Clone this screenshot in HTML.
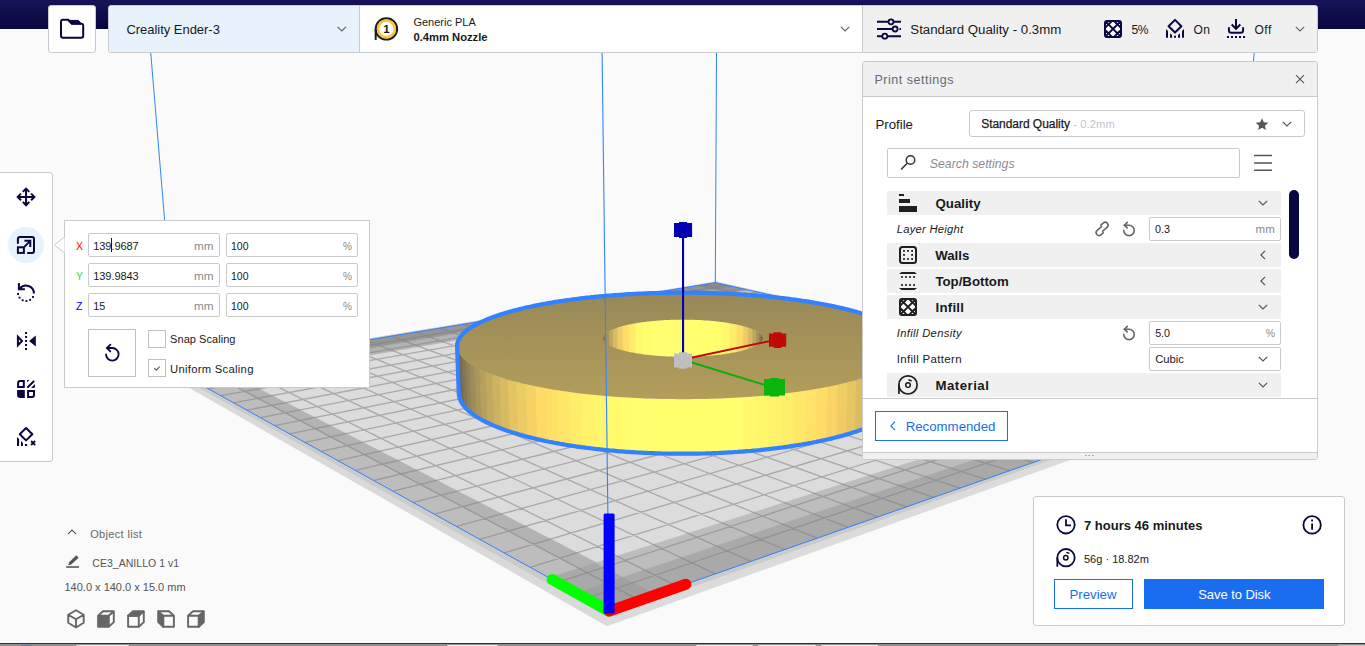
<!DOCTYPE html>
<html lang="en"><head><meta charset="utf-8"><title>Ultimaker Cura</title>
<style>
*{box-sizing:border-box;margin:0;padding:0}
html,body{width:1365px;height:646px;overflow:hidden;background:#fafafa}
body{position:relative;font-family:"Liberation Sans","DejaVu Sans",sans-serif;font-size:12px;color:#0c0b3e;-webkit-font-smoothing:antialiased}
#scene{position:absolute;left:0;top:0}
.abs{position:absolute}
.t{position:absolute;white-space:nowrap;line-height:1}
#hdr{position:absolute;left:0;top:0;width:1365px;height:29px;background:linear-gradient(#161458,#07063e)}
.box{position:absolute;background:#fff;border:1px solid #cacaca;border-radius:3px}
svg.i{position:absolute;overflow:visible}
.cat{left:24px;width:394px;height:24px;background:#f0f0f0}
.inp{left:286px;width:132px;height:24px;border-radius:2px}
.fld{width:132px;height:24px;border-radius:2px}
.tb{top:644.500px;height:1.500px;background:#ececec;border-radius:2px 2px 0 0}
</style></head><body>
<svg id="scene" width="1365" height="646" viewBox="0 0 1365 646"><defs><linearGradient id="tg" gradientUnits="userSpaceOnUse" x1="682.8" y1="97.1" x2="682.8" y2="577.1"><stop offset="0" stop-color="#666150"/><stop offset="1" stop-color="#e0c161"/></linearGradient></defs>
<rect width="1365" height="646" fill="#fafafa"/>
<polygon points="168.9,371.3 607.0,617.5 607.1,626.2 169.3,376.6" fill="#d9d9d9"/>
<polygon points="607.0,617.5 1233.1,395.9 1232.6,401.6 607.1,626.2" fill="#dbdbdb"/>
<polygon points="168.9,371.3 607.0,617.5 1233.1,395.9 715.7,281.5" fill="#cbcbcb"/>
<polygon points="177.2,371.5 609.1,611.1 1223.6,395.7 715.3,282.7" fill="#dcdcdc"/>
<polygon points="200.3,384.3 549.1,577.8 596.2,562.8 237.5,377.9" fill="#bdbdbd" stroke="#bdbdbd" stroke-width=".7"/>
<polygon points="223.7,380.3 578.8,568.3 596.2,562.8 237.5,377.9" fill="#b3b3b3" stroke="#b3b3b3" stroke-width=".7"/>
<polygon points="549.1,577.8 576.0,592.8 623.6,576.9 596.2,562.8" fill="#a9a9a9" stroke="#a9a9a9" stroke-width=".7"/>
<polygon points="576.0,592.8 609.1,611.1 657.2,594.2 623.6,576.9" fill="#a0a0a0" stroke="#a0a0a0" stroke-width=".7"/>
<polygon points="189.4,378.3 200.3,384.3 237.5,377.9 226.1,372.1" fill="#969696" stroke="#969696" stroke-width=".7"/>
<polygon points="177.2,371.5 189.4,378.3 226.1,372.1 213.5,365.5" fill="#8c8c8c" stroke="#8c8c8c" stroke-width=".7"/>
<polygon points="726.2,293.3 1141.6,388.6 1162.2,382.0 747.0,289.7" fill="#bdbdbd" stroke="#bdbdbd" stroke-width=".7"/>
<polygon points="726.2,293.3 1141.6,388.6 1149.4,386.1 734.1,292.0" fill="#b3b3b3" stroke="#b3b3b3" stroke-width=".7"/>
<polygon points="1141.6,388.6 1169.6,395.0 1190.1,388.2 1162.2,382.0" fill="#a9a9a9" stroke="#a9a9a9" stroke-width=".7"/>
<polygon points="1169.6,395.0 1203.3,402.8 1223.6,395.7 1190.1,388.2" fill="#a0a0a0" stroke="#a0a0a0" stroke-width=".7"/>
<polygon points="711.3,289.9 726.2,293.3 747.0,289.7 732.1,286.4" fill="#969696" stroke="#969696" stroke-width=".7"/>
<polygon points="694.6,286.1 711.3,289.9 732.1,286.4 715.3,282.7" fill="#8c8c8c" stroke="#8c8c8c" stroke-width=".7"/>
<polygon points="596.2,562.8 623.6,576.9 1169.6,395.0 1141.6,388.6" fill="#bdbdbd" stroke="#bdbdbd" stroke-width=".7"/>
<polygon points="623.6,576.9 657.2,594.2 1203.3,402.8 1169.6,395.0" fill="#a9a9a9" stroke="#a9a9a9" stroke-width=".7"/>
<polygon points="226.1,372.1 237.5,377.9 726.2,293.3 711.3,289.9" fill="#b2b2b2" stroke="#b2b2b2" stroke-width=".7"/>
<polygon points="213.5,365.5 226.1,372.1 711.3,289.9 694.6,286.1" fill="#969696" stroke="#969696" stroke-width=".7"/>
<path d="M200.0 367.7L639.5 600.4M185.5 376.1L726.7 285.2M229.7 362.8L678.4 586.8M196.8 382.4L742.3 288.7M258.5 358.1L715.4 573.8M208.6 388.9L758.3 292.2M286.5 353.5L750.8 561.4M220.8 395.7L774.7 295.9M313.8 349.0L784.7 549.5M233.5 402.8L791.5 299.6M340.3 344.6L817.1 538.2M246.7 410.1L808.9 303.5M366.2 340.3L848.1 527.3M260.4 417.7L826.7 307.4M391.3 336.2L877.8 516.9M274.6 425.6L845.0 311.5M415.8 332.1L906.3 506.9M289.5 433.8L863.9 315.7M439.7 328.2L933.7 497.3M304.9 442.3L883.3 320.0M462.9 324.3L960.0 488.1M321.0 451.3L903.3 324.5M485.6 320.6L985.3 479.2M337.8 460.6L923.9 329.1M507.8 316.9L1009.7 470.7M355.4 470.3L945.2 333.8M529.4 313.4L1033.2 462.4M373.7 480.5L967.1 338.7M550.4 309.9L1055.8 454.5M392.9 491.2L989.8 343.7M571.0 306.5L1077.6 446.9M413.1 502.4L1013.1 348.9M591.1 303.2L1098.7 439.5M434.2 514.1L1037.3 354.3M610.7 299.9L1119.0 432.3M456.4 526.4L1062.2 359.8M629.9 296.8L1138.6 425.5M479.7 539.3L1088.0 365.5M648.7 293.7L1157.6 418.8M504.2 552.9L1114.7 371.5M667.0 290.7L1176.0 412.4M530.1 567.3L1142.3 377.6M684.9 287.7L1193.8 406.1M557.4 582.4L1170.9 384.0M702.4 284.8L1211.0 400.1M586.3 598.5L1200.6 390.6" stroke="#808080" stroke-opacity=".55" stroke-width="1.3" fill="none"/>
<path d="M177.2 371.5L609.1 611.1M609.1 611.1L1223.6 395.7M1223.6 395.7L715.3 282.7M715.3 282.7L177.2 371.5M177.2 371.5L107.4 -469.1M1223.6 395.7L1304.3 -508.5M715.3 282.7L718.6 -330.8" stroke="#3282ff" stroke-width="1" fill="none"/>

<g shape-rendering="geometricPrecision"><polygon points="742.5,370.6 747.8,372.4 748.3,327.6 743.0,326.0" fill="#eecc63" stroke="#eecc63" stroke-width=".6"/>
<polygon points="747.8,372.4 752.3,374.3 752.8,329.4 748.3,327.6" fill="#d7ba60" stroke="#d7ba60" stroke-width=".6"/>
<polygon points="752.3,374.3 756.0,376.4 756.6,331.2 752.8,329.4" fill="#bea65c" stroke="#bea65c" stroke-width=".6"/>
<polygon points="756.0,376.4 758.8,378.6 759.4,333.1 756.6,331.2" fill="#a39159" stroke="#a39159" stroke-width=".6"/>
<polygon points="758.8,378.6 760.8,380.9 761.4,335.1 759.4,333.1" fill="#877b55" stroke="#877b55" stroke-width=".6"/>
<polygon points="760.8,380.9 761.8,383.3 762.4,337.2 761.4,335.1" fill="#6a6451" stroke="#6a6451" stroke-width=".6"/>
<polygon points="761.8,383.3 761.7,385.6 762.3,339.3 762.4,337.2" fill="#4d4d4d" stroke="#4d4d4d" stroke-width=".6"/>
<polygon points="603.9,385.5 603.9,383.1 603.3,337.0 603.3,339.1" fill="#4f4f4d" stroke="#4f4f4d" stroke-width=".6"/>
<polygon points="603.9,383.1 605.0,380.8 604.4,335.0 603.3,337.0" fill="#6c6651" stroke="#6c6651" stroke-width=".6"/>
<polygon points="605.0,380.8 607.0,378.5 606.4,333.0 604.4,335.0" fill="#897c55" stroke="#897c55" stroke-width=".6"/>
<polygon points="607.0,378.5 609.9,376.3 609.3,331.1 606.4,333.0" fill="#a59259" stroke="#a59259" stroke-width=".6"/>
<polygon points="609.9,376.3 613.6,374.2 613.1,329.2 609.3,331.1" fill="#bfa75d" stroke="#bfa75d" stroke-width=".6"/>
<polygon points="613.6,374.2 618.2,372.2 617.7,327.5 613.1,329.2" fill="#d9bb60" stroke="#d9bb60" stroke-width=".6"/>
<polygon points="618.2,372.2 623.5,370.4 623.1,325.9 617.7,327.5" fill="#f0cd64" stroke="#f0cd64" stroke-width=".6"/>
<polygon points="623.5,370.4 629.5,368.8 629.1,324.5 623.1,325.9" fill="#ffde67" stroke="#ffde67" stroke-width=".6"/>
<polygon points="629.5,368.8 636.0,367.4 635.7,323.2 629.1,324.5" fill="#ffed69" stroke="#ffed69" stroke-width=".6"/>
<polygon points="636.0,367.4 643.1,366.1 642.8,322.2 635.7,323.2" fill="#fffa6c" stroke="#fffa6c" stroke-width=".6"/>
<polygon points="643.1,366.1 650.6,365.1 650.3,321.3 642.8,322.2" fill="#ffff6e" stroke="#ffff6e" stroke-width=".6"/>
<polygon points="650.6,365.1 658.4,364.3 658.2,320.6 650.3,321.3" fill="#ffff6f" stroke="#ffff6f" stroke-width=".6"/>
<polygon points="658.4,364.3 666.5,363.7 666.4,320.0 658.2,320.6" fill="#ffff70" stroke="#ffff70" stroke-width=".6"/>
<polygon points="666.5,363.7 674.8,363.4 674.7,319.7 666.4,320.0" fill="#ffff70" stroke="#ffff70" stroke-width=".6"/>
<polygon points="674.8,363.4 683.1,363.3 683.1,319.6 674.7,319.7" fill="#ffff70" stroke="#ffff70" stroke-width=".6"/>
<polygon points="683.1,363.3 691.5,363.4 691.5,319.8 683.1,319.6" fill="#ffff70" stroke="#ffff70" stroke-width=".6"/>
<polygon points="691.5,363.4 699.7,363.8 699.8,320.1 691.5,319.8" fill="#ffff70" stroke="#ffff70" stroke-width=".6"/>
<polygon points="699.7,363.8 707.8,364.4 708.0,320.6 699.8,320.1" fill="#ffff70" stroke="#ffff70" stroke-width=".6"/>
<polygon points="707.8,364.4 715.6,365.2 715.8,321.3 708.0,320.6" fill="#ffff6f" stroke="#ffff6f" stroke-width=".6"/>
<polygon points="715.6,365.2 723.1,366.2 723.4,322.2 715.8,321.3" fill="#ffff6d" stroke="#ffff6d" stroke-width=".6"/>
<polygon points="723.1,366.2 730.1,367.5 730.4,323.3 723.4,322.2" fill="#fffa6b" stroke="#fffa6b" stroke-width=".6"/>
<polygon points="730.1,367.5 736.6,368.9 737.0,324.6 730.4,323.3" fill="#ffec69" stroke="#ffec69" stroke-width=".6"/>
<polygon points="736.6,368.9 742.5,370.6 743.0,326.0 737.0,324.6" fill="#ffdd66" stroke="#ffdd66" stroke-width=".6"/>
<polygon points="906.8,394.7 906.1,398.0 907.9,350.1 908.5,347.3" fill="#57544e" stroke="#57544e" stroke-width=".6"/>
<polygon points="906.1,398.0 904.8,401.2 906.6,353.0 907.9,350.1" fill="#635e50" stroke="#635e50" stroke-width=".6"/>
<polygon points="904.8,401.2 902.9,404.5 904.6,355.8 906.6,353.0" fill="#706851" stroke="#706851" stroke-width=".6"/>
<polygon points="902.9,404.5 900.2,407.7 902.0,358.7 904.6,355.8" fill="#7c7253" stroke="#7c7253" stroke-width=".6"/>
<polygon points="900.2,407.7 896.9,411.0 898.7,361.6 902.0,358.7" fill="#897c55" stroke="#897c55" stroke-width=".6"/>
<polygon points="896.9,411.0 892.9,414.2 894.6,364.4 898.7,361.6" fill="#958657" stroke="#958657" stroke-width=".6"/>
<polygon points="892.9,414.2 888.2,417.4 889.9,367.2 894.6,364.4" fill="#a18f58" stroke="#a18f58" stroke-width=".6"/>
<polygon points="888.2,417.4 882.8,420.5 884.4,369.9 889.9,367.2" fill="#ad995a" stroke="#ad995a" stroke-width=".6"/>
<polygon points="882.8,420.5 876.7,423.5 878.3,372.6 884.4,369.9" fill="#b9a25c" stroke="#b9a25c" stroke-width=".6"/>
<polygon points="876.7,423.5 869.9,426.5 871.5,375.2 878.3,372.6" fill="#c5ab5d" stroke="#c5ab5d" stroke-width=".6"/>
<polygon points="869.9,426.5 862.4,429.4 863.9,377.7 871.5,375.2" fill="#d0b45f" stroke="#d0b45f" stroke-width=".6"/>
<polygon points="862.4,429.4 854.3,432.1 855.7,380.2 863.9,377.7" fill="#dbbd61" stroke="#dbbd61" stroke-width=".6"/>
<polygon points="854.3,432.1 845.5,434.8 846.9,382.5 855.7,380.2" fill="#e6c562" stroke="#e6c562" stroke-width=".6"/>
<polygon points="845.5,434.8 836.1,437.3 837.4,384.8 846.9,382.5" fill="#f0cd63" stroke="#f0cd63" stroke-width=".6"/>
<polygon points="836.1,437.3 826.1,439.7 827.3,386.9 837.4,384.8" fill="#f9d465" stroke="#f9d465" stroke-width=".6"/>
<polygon points="826.1,439.7 815.5,442.0 816.7,388.8 827.3,386.9" fill="#ffdc66" stroke="#ffdc66" stroke-width=".6"/>
<polygon points="815.5,442.0 804.4,444.0 805.5,390.7 816.7,388.8" fill="#ffe267" stroke="#ffe267" stroke-width=".6"/>
<polygon points="804.4,444.0 792.8,445.9 793.8,392.3 805.5,390.7" fill="#ffe868" stroke="#ffe868" stroke-width=".6"/>
<polygon points="792.8,445.9 780.7,447.6 781.6,393.8 793.8,392.3" fill="#ffee69" stroke="#ffee69" stroke-width=".6"/>
<polygon points="780.7,447.6 768.2,449.2 769.0,395.2 781.6,393.8" fill="#fff36a" stroke="#fff36a" stroke-width=".6"/>
<polygon points="768.2,449.2 755.4,450.5 756.1,396.3 769.0,395.2" fill="#fff76b" stroke="#fff76b" stroke-width=".6"/>
<polygon points="755.4,450.5 742.3,451.6 742.8,397.3 756.1,396.3" fill="#fffb6c" stroke="#fffb6c" stroke-width=".6"/>
<polygon points="742.3,451.6 728.9,452.4 729.3,398.1 742.8,397.3" fill="#fffe6c" stroke="#fffe6c" stroke-width=".6"/>
<polygon points="728.9,452.4 715.3,453.1 715.6,398.6 729.3,398.1" fill="#ffff6d" stroke="#ffff6d" stroke-width=".6"/>
<polygon points="715.3,453.1 701.5,453.5 701.7,399.0 715.6,398.6" fill="#ffff6d" stroke="#ffff6d" stroke-width=".6"/>
<polygon points="701.5,453.5 687.7,453.7 687.8,399.2 701.7,399.0" fill="#ffff6d" stroke="#ffff6d" stroke-width=".6"/>
<polygon points="687.7,453.7 673.9,453.7 673.8,399.1 687.8,399.2" fill="#ffff6d" stroke="#ffff6d" stroke-width=".6"/>
<polygon points="673.9,453.7 660.1,453.4 659.9,398.9 673.8,399.1" fill="#ffff6d" stroke="#ffff6d" stroke-width=".6"/>
<polygon points="660.1,453.4 646.4,452.9 646.1,398.5 659.9,398.9" fill="#ffff6d" stroke="#ffff6d" stroke-width=".6"/>
<polygon points="646.4,452.9 632.9,452.2 632.4,397.8 646.1,398.5" fill="#ffff6d" stroke="#ffff6d" stroke-width=".6"/>
<polygon points="632.9,452.2 619.5,451.3 619.0,397.0 632.4,397.8" fill="#fffd6c" stroke="#fffd6c" stroke-width=".6"/>
<polygon points="619.5,451.3 606.5,450.1 605.8,396.0 619.0,397.0" fill="#fffa6b" stroke="#fffa6b" stroke-width=".6"/>
<polygon points="606.5,450.1 593.7,448.7 592.9,394.8 605.8,396.0" fill="#fff66b" stroke="#fff66b" stroke-width=".6"/>
<polygon points="593.7,448.7 581.4,447.2 580.5,393.4 592.9,394.8" fill="#fff16a" stroke="#fff16a" stroke-width=".6"/>
<polygon points="581.4,447.2 569.5,445.4 568.4,391.8 580.5,393.4" fill="#ffec69" stroke="#ffec69" stroke-width=".6"/>
<polygon points="569.5,445.4 558.0,443.4 556.9,390.1 568.4,391.8" fill="#ffe668" stroke="#ffe668" stroke-width=".6"/>
<polygon points="558.0,443.4 547.0,441.3 545.8,388.3 556.9,390.1" fill="#ffe067" stroke="#ffe067" stroke-width=".6"/>
<polygon points="547.0,441.3 536.6,439.0 535.3,386.2 545.8,388.3" fill="#ffda66" stroke="#ffda66" stroke-width=".6"/>
<polygon points="536.6,439.0 526.8,436.6 525.4,384.1 535.3,386.2" fill="#f6d264" stroke="#f6d264" stroke-width=".6"/>
<polygon points="526.8,436.6 517.6,434.0 516.1,381.8 525.4,384.1" fill="#edcb63" stroke="#edcb63" stroke-width=".6"/>
<polygon points="517.6,434.0 509.0,431.3 507.5,379.5 516.1,381.8" fill="#e3c362" stroke="#e3c362" stroke-width=".6"/>
<polygon points="509.0,431.3 501.0,428.5 499.5,377.0 507.5,379.5" fill="#d8ba60" stroke="#d8ba60" stroke-width=".6"/>
<polygon points="501.0,428.5 493.7,425.6 492.1,374.4 499.5,377.0" fill="#cdb25f" stroke="#cdb25f" stroke-width=".6"/>
<polygon points="493.7,425.6 487.2,422.6 485.5,371.8 492.1,374.4" fill="#c2a95d" stroke="#c2a95d" stroke-width=".6"/>
<polygon points="487.2,422.6 481.2,419.5 479.6,369.1 485.5,371.8" fill="#b6a05b" stroke="#b6a05b" stroke-width=".6"/>
<polygon points="481.2,419.5 476.0,416.4 474.3,366.3 479.6,369.1" fill="#aa965a" stroke="#aa965a" stroke-width=".6"/>
<polygon points="476.0,416.4 471.5,413.2 469.8,363.5 474.3,366.3" fill="#9e8d58" stroke="#9e8d58" stroke-width=".6"/>
<polygon points="471.5,413.2 467.7,410.0 466.0,360.7 469.8,363.5" fill="#928356" stroke="#928356" stroke-width=".6"/>
<polygon points="467.7,410.0 464.6,406.8 462.8,357.9 466.0,360.7" fill="#857954" stroke="#857954" stroke-width=".6"/>
<polygon points="464.6,406.8 462.1,403.5 460.4,355.0 462.8,357.9" fill="#796f53" stroke="#796f53" stroke-width=".6"/>
<polygon points="462.1,403.5 460.4,400.3 458.6,352.1 460.4,355.0" fill="#6c6551" stroke="#6c6551" stroke-width=".6"/>
<polygon points="460.4,400.3 459.3,397.0 457.5,349.3 458.6,352.1" fill="#5f5b4f" stroke="#5f5b4f" stroke-width=".6"/>
<polygon points="459.3,397.0 458.8,393.8 457.1,346.4 457.5,349.3" fill="#53524d" stroke="#53524d" stroke-width=".6"/>
<path fill-rule="evenodd" fill="url(#tg)" d="M836.8,307.0L839.4,307.6L841.9,308.1L844.4,308.7L846.8,309.3L849.3,309.9L851.6,310.6L854.0,311.2L856.3,311.8L858.5,312.5L860.8,313.2L863.0,313.8L865.1,314.5L867.2,315.2L869.3,315.9L871.3,316.6L873.3,317.3L875.2,318.1L877.1,318.8L878.9,319.5L880.7,320.3L882.5,321.1L884.2,321.8L885.8,322.6L887.4,323.4L889.0,324.2L890.5,325.0L891.9,325.8L893.3,326.7L894.6,327.5L895.9,328.3L897.1,329.2L898.3,330.0L899.4,330.9L900.4,331.7L901.4,332.6L902.3,333.5L903.2,334.4L904.0,335.3L904.8,336.2L905.4,337.1L906.0,338.0L906.6,338.9L907.1,339.8L907.5,340.7L907.8,341.6L908.1,342.6L908.3,343.5L908.5,344.4L908.6,345.4L908.6,346.3L908.5,347.3L908.4,348.2L908.2,349.2L907.9,350.1L907.5,351.1L907.1,352.0L906.6,353.0L906.0,353.9L905.4,354.9L904.6,355.8L903.8,356.8L902.9,357.8L902.0,358.7L901.0,359.7L899.8,360.6L898.7,361.6L897.4,362.5L896.0,363.4L894.6,364.4L893.1,365.3L891.5,366.2L889.9,367.2L888.1,368.1L886.3,369.0L884.4,369.9L882.5,370.8L880.4,371.7L878.3,372.6L876.1,373.5L873.8,374.3L871.5,375.2L869.0,376.1L866.5,376.9L863.9,377.7L861.3,378.6L858.5,379.4L855.7,380.2L852.9,381.0L849.9,381.8L846.9,382.5L843.8,383.3L840.6,384.0L837.4,384.8L834.1,385.5L830.8,386.2L827.3,386.9L823.8,387.5L820.3,388.2L816.7,388.8L813.0,389.5L809.3,390.1L805.5,390.7L801.6,391.2L797.7,391.8L793.8,392.3L789.8,392.8L785.7,393.3L781.6,393.8L777.4,394.3L773.3,394.7L769.0,395.2L764.7,395.6L760.4,395.9L756.1,396.3L751.7,396.7L747.3,397.0L742.8,397.3L738.3,397.6L733.8,397.8L729.3,398.1L724.7,398.3L720.2,398.5L715.6,398.6L711.0,398.8L706.4,398.9L701.7,399.0L697.1,399.1L692.4,399.1L687.8,399.2L683.1,399.2L678.5,399.2L673.8,399.1L669.2,399.1L664.5,399.0L659.9,398.9L655.3,398.8L650.7,398.6L646.1,398.5L641.5,398.3L636.9,398.1L632.4,397.8L627.9,397.6L623.4,397.3L619.0,397.0L614.5,396.7L610.1,396.3L605.8,396.0L601.5,395.6L597.2,395.2L592.9,394.8L588.7,394.3L584.6,393.9L580.5,393.4L576.4,392.9L572.4,392.4L568.4,391.8L564.5,391.3L560.7,390.7L556.9,390.1L553.1,389.5L549.5,388.9L545.8,388.3L542.3,387.6L538.8,386.9L535.3,386.2L532.0,385.5L528.7,384.8L525.4,384.1L522.3,383.4L519.2,382.6L516.1,381.8L513.2,381.1L510.3,380.3L507.5,379.5L504.7,378.6L502.1,377.8L499.5,377.0L497.0,376.1L494.5,375.3L492.1,374.4L489.9,373.6L487.6,372.7L485.5,371.8L483.4,370.9L481.5,370.0L479.6,369.1L477.7,368.2L476.0,367.3L474.3,366.3L472.7,365.4L471.2,364.5L469.8,363.5L468.4,362.6L467.2,361.7L466.0,360.7L464.8,359.8L463.8,358.8L462.8,357.9L461.9,356.9L461.1,355.9L460.4,355.0L459.7,354.0L459.1,353.1L458.6,352.1L458.2,351.2L457.8,350.2L457.5,349.3L457.3,348.3L457.2,347.4L457.1,346.4L457.1,345.5L457.1,344.5L457.3,343.6L457.5,342.7L457.8,341.7L458.1,340.8L458.5,339.9L459.0,339.0L459.5,338.1L460.1,337.2L460.8,336.3L461.5,335.4L462.3,334.5L463.2,333.6L464.1,332.7L465.1,331.8L466.1,331.0L467.2,330.1L468.4,329.3L469.6,328.4L470.9,327.6L472.2,326.7L473.6,325.9L475.0,325.1L476.5,324.3L478.0,323.5L479.6,322.7L481.3,321.9L482.9,321.2L484.7,320.4L486.5,319.6L488.3,318.9L490.2,318.1L492.1,317.4L494.1,316.7L496.1,316.0L498.2,315.3L500.3,314.6L502.4,313.9L504.6,313.2L506.8,312.6L509.1,311.9L511.4,311.3L513.7,310.6L516.1,310.0L518.5,309.4L520.9,308.8L523.4,308.2L525.9,307.6L528.5,307.0L531.1,306.5L533.7,305.9L536.3,305.4L539.0,304.9L541.7,304.3L544.4,303.8L547.2,303.3L550.0,302.9L552.8,302.4L555.6,301.9L558.5,301.5L561.4,301.0L564.3,300.6L567.2,300.2L570.2,299.8L573.1,299.4L576.1,299.0L579.1,298.6L582.2,298.2L585.2,297.9L588.3,297.5L591.4,297.2L594.5,296.9L597.6,296.6L600.8,296.3L603.9,296.0L607.1,295.7L610.3,295.5L613.5,295.2L616.7,295.0L619.9,294.8L623.2,294.5L626.4,294.3L629.6,294.2L632.9,294.0L636.2,293.8L639.5,293.6L642.8,293.5L646.0,293.4L649.4,293.2L652.7,293.1L656.0,293.0L659.3,292.9L662.6,292.9L665.9,292.8L669.3,292.8L672.6,292.7L675.9,292.7L679.3,292.7L682.6,292.7L685.9,292.7L689.3,292.7L692.6,292.7L695.9,292.7L699.3,292.8L702.6,292.9L705.9,292.9L709.2,293.0L712.5,293.1L715.8,293.2L719.2,293.4L722.4,293.5L725.7,293.6L729.0,293.8L732.3,294.0L735.6,294.1L738.8,294.3L742.1,294.5L745.3,294.7L748.5,295.0L751.7,295.2L754.9,295.4L758.1,295.7L761.3,296.0L764.4,296.3L767.6,296.6L770.7,296.9L773.8,297.2L776.9,297.5L780.0,297.8L783.1,298.2L786.1,298.6L789.1,298.9L792.1,299.3L795.1,299.7L798.1,300.1L801.0,300.5L803.9,301.0L806.8,301.4L809.7,301.9L812.5,302.3L815.3,302.8L818.1,303.3L820.9,303.8L823.6,304.3L826.3,304.8L829.0,305.3L831.6,305.9L834.2,306.4ZM741.4,325.6L742.3,325.9L743.2,326.1L744.1,326.4L744.9,326.6L745.8,326.8L746.6,327.1L747.4,327.3L748.2,327.6L748.9,327.9L749.7,328.1L750.4,328.4L751.1,328.6L751.8,328.9L752.4,329.2L753.1,329.5L753.7,329.8L754.3,330.0L754.9,330.3L755.5,330.6L756.0,330.9L756.6,331.2L757.1,331.5L757.5,331.8L758.0,332.1L758.4,332.4L758.9,332.7L759.3,333.0L759.6,333.3L760.0,333.6L760.3,333.9L760.6,334.2L760.9,334.5L761.2,334.9L761.4,335.2L761.6,335.5L761.8,335.8L762.0,336.1L762.1,336.5L762.2,336.8L762.3,337.1L762.4,337.4L762.4,337.7L762.5,338.1L762.5,338.4L762.4,338.7L762.4,339.0L762.3,339.4L762.2,339.7L762.1,340.0L761.9,340.3L761.8,340.7L761.6,341.0L761.4,341.3L761.1,341.6L760.8,342.0L760.5,342.3L760.2,342.6L759.9,342.9L759.5,343.2L759.1,343.6L758.7,343.9L758.2,344.2L757.8,344.5L757.3,344.8L756.8,345.1L756.2,345.4L755.7,345.7L755.1,346.0L754.5,346.3L753.8,346.6L753.2,346.9L752.5,347.2L751.8,347.5L751.0,347.8L750.3,348.1L749.5,348.4L748.7,348.6L747.9,348.9L747.1,349.2L746.2,349.5L745.3,349.7L744.4,350.0L743.5,350.3L742.5,350.5L741.6,350.8L740.6,351.0L739.6,351.2L738.5,351.5L737.5,351.7L736.4,352.0L735.3,352.2L734.2,352.4L733.1,352.6L732.0,352.8L730.8,353.0L729.6,353.2L728.5,353.4L727.3,353.6L726.0,353.8L724.8,354.0L723.6,354.2L722.3,354.3L721.0,354.5L719.7,354.7L718.4,354.8L717.1,355.0L715.8,355.1L714.4,355.3L713.1,355.4L711.7,355.5L710.3,355.6L708.9,355.8L707.5,355.9L706.1,356.0L704.7,356.1L703.3,356.2L701.9,356.2L700.5,356.3L699.0,356.4L697.6,356.5L696.1,356.5L694.7,356.6L693.2,356.6L691.7,356.7L690.3,356.7L688.8,356.7L687.3,356.8L685.9,356.8L684.4,356.8L682.9,356.8L681.4,356.8L680.0,356.8L678.5,356.8L677.0,356.7L675.6,356.7L674.1,356.7L672.6,356.6L671.2,356.6L669.7,356.5L668.3,356.5L666.8,356.4L665.4,356.3L663.9,356.3L662.5,356.2L661.1,356.1L659.7,356.0L658.3,355.9L656.9,355.8L655.5,355.7L654.1,355.5L652.7,355.4L651.4,355.3L650.1,355.1L648.7,355.0L647.4,354.8L646.1,354.7L644.8,354.5L643.5,354.4L642.3,354.2L641.0,354.0L639.8,353.8L638.5,353.6L637.3,353.5L636.1,353.3L635.0,353.1L633.8,352.8L632.7,352.6L631.5,352.4L630.4,352.2L629.4,352.0L628.3,351.7L627.2,351.5L626.2,351.3L625.2,351.0L624.2,350.8L623.2,350.5L622.3,350.3L621.4,350.0L620.4,349.8L619.6,349.5L618.7,349.2L617.9,349.0L617.0,348.7L616.2,348.4L615.5,348.1L614.7,347.8L614.0,347.5L613.3,347.3L612.6,347.0L611.9,346.7L611.3,346.4L610.6,346.1L610.1,345.8L609.5,345.5L608.9,345.2L608.4,344.8L607.9,344.5L607.5,344.2L607.0,343.9L606.6,343.6L606.2,343.3L605.8,343.0L605.5,342.6L605.1,342.3L604.8,342.0L604.6,341.7L604.3,341.4L604.1,341.0L603.9,340.7L603.7,340.4L603.6,340.1L603.4,339.7L603.3,339.4L603.3,339.1L603.2,338.8L603.2,338.4L603.2,338.1L603.2,337.8L603.2,337.5L603.3,337.1L603.4,336.8L603.5,336.5L603.6,336.2L603.8,335.8L604.0,335.5L604.2,335.2L604.4,334.9L604.7,334.6L605.0,334.3L605.3,334.0L605.6,333.6L606.0,333.3L606.3,333.0L606.7,332.7L607.1,332.4L607.6,332.1L608.0,331.8L608.5,331.5L609.0,331.2L609.5,330.9L610.1,330.6L610.7,330.3L611.2,330.1L611.8,329.8L612.5,329.5L613.1,329.2L613.8,328.9L614.5,328.7L615.2,328.4L615.9,328.1L616.6,327.9L617.4,327.6L618.2,327.4L619.0,327.1L619.8,326.9L620.6,326.6L621.4,326.4L622.3,326.1L623.2,325.9L624.1,325.7L625.0,325.4L625.9,325.2L626.9,325.0L627.8,324.8L628.8,324.6L629.8,324.4L630.8,324.2L631.8,324.0L632.8,323.8L633.8,323.6L634.9,323.4L636.0,323.2L637.0,323.0L638.1,322.8L639.2,322.7L640.4,322.5L641.5,322.3L642.6,322.2L643.8,322.0L644.9,321.9L646.1,321.7L647.3,321.6L648.4,321.5L649.6,321.3L650.8,321.2L652.1,321.1L653.3,321.0L654.5,320.9L655.7,320.7L657.0,320.6L658.2,320.6L659.5,320.5L660.7,320.4L662.0,320.3L663.3,320.2L664.5,320.1L665.8,320.1L667.1,320.0L668.4,320.0L669.7,319.9L671.0,319.8L672.3,319.8L673.6,319.8L674.9,319.7L676.2,319.7L677.5,319.7L678.8,319.7L680.1,319.7L681.4,319.6L682.7,319.6L684.0,319.6L685.4,319.7L686.7,319.7L688.0,319.7L689.3,319.7L690.6,319.7L691.9,319.8L693.2,319.8L694.5,319.8L695.8,319.9L697.1,319.9L698.4,320.0L699.6,320.1L700.9,320.1L702.2,320.2L703.5,320.3L704.7,320.4L706.0,320.4L707.3,320.5L708.5,320.6L709.7,320.7L711.0,320.8L712.2,321.0L713.4,321.1L714.6,321.2L715.8,321.3L717.0,321.4L718.2,321.6L719.4,321.7L720.6,321.9L721.7,322.0L722.9,322.2L724.0,322.3L725.1,322.5L726.3,322.6L727.4,322.8L728.4,323.0L729.5,323.2L730.6,323.4L731.7,323.5L732.7,323.7L733.7,323.9L734.7,324.1L735.7,324.3L736.7,324.5L737.7,324.8L738.7,325.0L739.6,325.2L740.5,325.4Z"/>
<polygon points="908.6,345.9 908.6,346.3 906.8,393.7 906.8,394.2 906.8,394.7 906.7,395.3 906.6,395.8 906.5,396.4 906.4,396.9 906.3,397.4 906.1,398.0 905.9,398.5 905.8,399.1 905.6,399.6 905.3,400.2 905.1,400.7 904.8,401.2 904.5,401.8 904.2,402.3 903.9,402.9 903.6,403.4 903.2,404.0 902.9,404.5 902.5,405.0 902.1,405.6 901.6,406.1 901.2,406.7 900.7,407.2 900.2,407.7 899.7,408.3 899.2,408.8 898.6,409.4 898.1,409.9 897.5,410.4 896.9,411.0 896.3,411.5 895.6,412.1 895.0,412.6 894.3,413.1 893.6,413.7 892.9,414.2 892.1,414.7 891.4,415.3 890.6,415.8 889.8,416.3 889.0,416.8 888.2,417.4 887.3,417.9 886.4,418.4 885.6,418.9 884.6,419.4 883.7,420.0 882.8,420.5 881.8,421.0 880.8,421.5 879.8,422.0 878.8,422.5 877.7,423.0 876.7,423.5 875.6,424.0 874.5,424.5 873.3,425.0 872.2,425.5 871.0,426.0 869.9,426.5 868.7,427.0 867.4,427.5 866.2,427.9 865.0,428.4 863.7,428.9 862.4,429.4 861.1,429.8 859.8,430.3 858.4,430.8 857.0,431.2 855.7,431.7 854.3,432.1 852.8,432.6 851.4,433.1 849.9,433.5 848.5,433.9 847.0,434.4 845.5,434.8 843.9,435.2 842.4,435.7 840.8,436.1 839.3,436.5 837.7,436.9 836.1,437.3 834.4,437.8 832.8,438.2 831.1,438.6 829.5,439.0 827.8,439.3 826.1,439.7 824.3,440.1 822.6,440.5 820.8,440.9 819.1,441.2 817.3,441.6 815.5,442.0 813.7,442.3 811.8,442.7 810.0,443.0 808.1,443.4 806.3,443.7 804.4,444.0 802.5,444.4 800.6,444.7 798.6,445.0 796.7,445.3 794.7,445.6 792.8,445.9 790.8,446.2 788.8,446.5 786.8,446.8 784.8,447.1 782.8,447.4 780.7,447.6 778.7,447.9 776.6,448.2 774.5,448.4 772.4,448.7 770.3,448.9 768.2,449.2 766.1,449.4 764.0,449.6 761.9,449.8 759.7,450.1 757.6,450.3 755.4,450.5 753.2,450.7 751.1,450.9 748.9,451.0 746.7,451.2 744.5,451.4 742.3,451.6 740.1,451.7 737.8,451.9 735.6,452.0 733.4,452.2 731.1,452.3 728.9,452.4 726.6,452.6 724.4,452.7 722.1,452.8 719.8,452.9 717.6,453.0 715.3,453.1 713.0,453.2 710.7,453.3 708.4,453.3 706.1,453.4 703.8,453.5 701.5,453.5 699.2,453.6 696.9,453.6 694.6,453.7 692.3,453.7 690.0,453.7 687.7,453.7 685.4,453.7 683.1,453.7 680.8,453.7 678.5,453.7 676.2,453.7 673.9,453.7 671.6,453.7 669.3,453.6 667.0,453.6 664.7,453.5 662.4,453.5 660.1,453.4 657.8,453.4 655.5,453.3 653.2,453.2 650.9,453.1 648.7,453.0 646.4,452.9 644.1,452.8 641.9,452.7 639.6,452.6 637.3,452.5 635.1,452.3 632.9,452.2 630.6,452.1 628.4,451.9 626.2,451.8 623.9,451.6 621.7,451.4 619.5,451.3 617.3,451.1 615.1,450.9 613.0,450.7 610.8,450.5 608.6,450.3 606.5,450.1 604.3,449.9 602.2,449.7 600.1,449.4 597.9,449.2 595.8,449.0 593.7,448.7 591.7,448.5 589.6,448.2 587.5,448.0 585.5,447.7 583.4,447.4 581.4,447.2 579.4,446.9 577.4,446.6 575.4,446.3 573.4,446.0 571.4,445.7 569.5,445.4 567.5,445.1 565.6,444.8 563.7,444.4 561.8,444.1 559.9,443.8 558.0,443.4 556.1,443.1 554.3,442.8 552.4,442.4 550.6,442.0 548.8,441.7 547.0,441.3 545.3,441.0 543.5,440.6 541.8,440.2 540.0,439.8 538.3,439.4 536.6,439.0 534.9,438.6 533.3,438.2 531.6,437.8 530.0,437.4 528.4,437.0 526.8,436.6 525.2,436.2 523.6,435.8 522.1,435.3 520.6,434.9 519.1,434.5 517.6,434.0 516.1,433.6 514.6,433.1 513.2,432.7 511.8,432.2 510.4,431.8 509.0,431.3 507.6,430.9 506.2,430.4 504.9,429.9 503.6,429.5 502.3,429.0 501.0,428.5 499.8,428.0 498.5,427.6 497.3,427.1 496.1,426.6 494.9,426.1 493.7,425.6 492.6,425.1 491.5,424.6 490.4,424.1 489.3,423.6 488.2,423.1 487.2,422.6 486.1,422.1 485.1,421.6 484.1,421.1 483.1,420.6 482.2,420.1 481.2,419.5 480.3,419.0 479.4,418.5 478.6,418.0 477.7,417.5 476.9,416.9 476.0,416.4 475.2,415.9 474.5,415.4 473.7,414.8 473.0,414.3 472.2,413.8 471.5,413.2 470.8,412.7 470.2,412.2 469.5,411.6 468.9,411.1 468.3,410.6 467.7,410.0 467.1,409.5 466.6,408.9 466.1,408.4 465.6,407.9 465.1,407.3 464.6,406.8 464.1,406.2 463.7,405.7 463.3,405.2 462.9,404.6 462.5,404.1 462.1,403.5 461.8,403.0 461.5,402.4 461.2,401.9 460.9,401.4 460.6,400.8 460.4,400.3 460.2,399.7 459.9,399.2 459.8,398.6 459.6,398.1 459.4,397.6 459.3,397.0 459.2,396.5 459.1,395.9 459.0,395.4 458.9,394.9 458.9,394.3 458.8,393.8 457.1,346.4 457.1,346.0 457.1,345.5 457.1,345.0 457.1,344.5 457.2,344.1 457.3,343.6 457.4,343.1 457.5,342.7 457.6,342.2 457.8,341.7 457.9,341.3 458.1,340.8 458.3,340.4 458.5,339.9 458.7,339.4 459.0,339.0 459.3,338.5 459.5,338.1 459.8,337.6 460.1,337.2 460.5,336.7 460.8,336.3 461.2,335.8 461.5,335.4 461.9,334.9 462.3,334.5 462.8,334.0 463.2,333.6 463.6,333.1 464.1,332.7 464.6,332.3 465.1,331.8 465.6,331.4 466.1,331.0 466.7,330.5 467.2,330.1 467.8,329.7 468.4,329.3 469.0,328.8 469.6,328.4 470.2,328.0 470.9,327.6 471.5,327.2 472.2,326.7 472.9,326.3 473.6,325.9 474.3,325.5 475.0,325.1 475.7,324.7 476.5,324.3 477.3,323.9 478.0,323.5 478.8,323.1 479.6,322.7 480.4,322.3 481.3,321.9 482.1,321.5 482.9,321.2 483.8,320.8 484.7,320.4 485.6,320.0 486.5,319.6 487.4,319.3 488.3,318.9 489.2,318.5 490.2,318.1 491.1,317.8 492.1,317.4 493.1,317.0 494.1,316.7 495.1,316.3 496.1,316.0 497.1,315.6 498.2,315.3 499.2,314.9 500.3,314.6 501.3,314.2 502.4,313.9 503.5,313.6 504.6,313.2 505.7,312.9 506.8,312.6 507.9,312.2 509.1,311.9 510.2,311.6 511.4,311.3 512.5,310.9 513.7,310.6 514.9,310.3 516.1,310.0 517.3,309.7 518.5,309.4 519.7,309.1 520.9,308.8 522.2,308.5 523.4,308.2 524.7,307.9 525.9,307.6 527.2,307.3 528.5,307.0 529.8,306.8 531.1,306.5 532.4,306.2 533.7,305.9 535.0,305.7 536.3,305.4 537.6,305.1 539.0,304.9 540.3,304.6 541.7,304.3 543.0,304.1 544.4,303.8 545.8,303.6 547.2,303.3 548.6,303.1 550.0,302.9 551.4,302.6 552.8,302.4 554.2,302.1 555.6,301.9 557.0,301.7 558.5,301.5 559.9,301.2 561.4,301.0 562.8,300.8 564.3,300.6 565.7,300.4 567.2,300.2 568.7,300.0 570.2,299.8 571.6,299.6 573.1,299.4 574.6,299.2 576.1,299.0 577.6,298.8 579.1,298.6 580.7,298.4 582.2,298.2 583.7,298.1 585.2,297.9 586.8,297.7 588.3,297.5 589.9,297.4 591.4,297.2 593.0,297.1 594.5,296.9 596.1,296.7 597.6,296.6 599.2,296.4 600.8,296.3 602.4,296.1 603.9,296.0 605.5,295.9 607.1,295.7 608.7,295.6 610.3,295.5 611.9,295.3 613.5,295.2 615.1,295.1 616.7,295.0 618.3,294.9 619.9,294.8 621.5,294.7 623.2,294.5 624.8,294.4 626.4,294.3 628.0,294.2 629.6,294.2 631.3,294.1 632.9,294.0 634.5,293.9 636.2,293.8 637.8,293.7 639.5,293.6 641.1,293.6 642.8,293.5 644.4,293.4 646.0,293.4 647.7,293.3 649.4,293.2 651.0,293.2 652.7,293.1 654.3,293.1 656.0,293.0 657.6,293.0 659.3,292.9 661.0,292.9 662.6,292.9 664.3,292.8 665.9,292.8 667.6,292.8 669.3,292.8 670.9,292.7 672.6,292.7 674.3,292.7 675.9,292.7 677.6,292.7 679.3,292.7 680.9,292.7 682.6,292.7 684.3,292.7 685.9,292.7 687.6,292.7 689.3,292.7 690.9,292.7 692.6,292.7 694.3,292.7 695.9,292.7 697.6,292.8 699.3,292.8 700.9,292.8 702.6,292.9 704.2,292.9 705.9,292.9 707.6,293.0 709.2,293.0 710.9,293.1 712.5,293.1 714.2,293.2 715.8,293.2 717.5,293.3 719.2,293.4 720.8,293.4 722.4,293.5 724.1,293.6 725.7,293.6 727.4,293.7 729.0,293.8 730.7,293.9 732.3,294.0 733.9,294.0 735.6,294.1 737.2,294.2 738.8,294.3 740.4,294.4 742.1,294.5 743.7,294.6 745.3,294.7 746.9,294.8 748.5,295.0 750.1,295.1 751.7,295.2 753.3,295.3 754.9,295.4 756.5,295.6 758.1,295.7 759.7,295.8 761.3,296.0 762.9,296.1 764.4,296.3 766.0,296.4 767.6,296.6 769.2,296.7 770.7,296.9 772.3,297.0 773.8,297.2 775.4,297.3 776.9,297.5 778.5,297.7 780.0,297.8 781.5,298.0 783.1,298.2 784.6,298.4 786.1,298.6 787.6,298.7 789.1,298.9 790.6,299.1 792.1,299.3 793.6,299.5 795.1,299.7 796.6,299.9 798.1,300.1 799.5,300.3 801.0,300.5 802.5,300.8 803.9,301.0 805.4,301.2 806.8,301.4 808.2,301.6 809.7,301.9 811.1,302.1 812.5,302.3 813.9,302.6 815.3,302.8 816.7,303.0 818.1,303.3 819.5,303.5 820.9,303.8 822.2,304.0 823.6,304.3 825.0,304.5 826.3,304.8 827.6,305.1 829.0,305.3 830.3,305.6 831.6,305.9 832.9,306.1 834.2,306.4 835.5,306.7 836.8,307.0 838.1,307.3 839.4,307.6 840.6,307.8 841.9,308.1 843.1,308.4 844.4,308.7 845.6,309.0 846.8,309.3 848.0,309.6 849.3,309.9 850.4,310.3 851.6,310.6 852.8,310.9 854.0,311.2 855.1,311.5 856.3,311.8 857.4,312.2 858.5,312.5 859.7,312.8 860.8,313.2 861.9,313.5 863.0,313.8 864.0,314.2 865.1,314.5 866.2,314.9 867.2,315.2 868.3,315.5 869.3,315.9 870.3,316.3 871.3,316.6 872.3,317.0 873.3,317.3 874.3,317.7 875.2,318.1 876.2,318.4 877.1,318.8 878.0,319.2 878.9,319.5 879.8,319.9 880.7,320.3 881.6,320.7 882.5,321.1 883.3,321.5 884.2,321.8 885.0,322.2 885.8,322.6 886.6,323.0 887.4,323.4 888.2,323.8 889.0,324.2 889.7,324.6 890.5,325.0 891.2,325.4 891.9,325.8 892.6,326.2 893.3,326.7 894.0,327.1 894.6,327.5 895.3,327.9 895.9,328.3 896.5,328.7 897.1,329.2 897.7,329.6 898.3,330.0 898.8,330.5 899.4,330.9 899.9,331.3 900.4,331.7 900.9,332.2 901.4,332.6 901.9,333.1 902.3,333.5 902.8,333.9 903.2,334.4 903.6,334.8 904.0,335.3 904.4,335.7 904.8,336.2 905.1,336.6 905.4,337.1 905.7,337.5 906.0,338.0 906.3,338.4 906.6,338.9 906.8,339.3 907.1,339.8 907.3,340.3 907.5,340.7 907.7,341.2 907.8,341.6 908.0,342.1 908.1,342.6 908.2,343.0 908.3,343.5 908.4,344.0 908.5,344.4 908.5,344.9 908.6,345.4" fill="none" stroke="#3282ff" stroke-width="4.2" stroke-linejoin="round"/></g>
<line x1="609.1" y1="611.1" x2="590.2" y2="-896.1" stroke="#3282ff" stroke-width="1.1"/>
<line x1="609.1" y1="611.1" x2="552.2" y2="579.5" stroke="#00ff00" stroke-width="11.0" stroke-linecap="round"/>
<line x1="609.1" y1="611.1" x2="685.9" y2="584.2" stroke="#ff0000" stroke-width="11.0" stroke-linecap="round"/>
<rect x="603.6" y="513.6" width="11" height="100.0" rx="1.5" fill="#0000ff"/>
<line x1="683.05" y1="360" x2="683.05" y2="230" stroke="#0000b0" stroke-width="2.1"/>
<line x1="683" y1="359.6" x2="777.5" y2="339.4" stroke="#c00a0a" stroke-width="2"/>
<line x1="683" y1="359.8" x2="774.5" y2="387.9" stroke="#0ab00a" stroke-width="2"/>
<polygon points="674.0,353.4 679.0,353.4 679.0,352.3 687.0,352.3 687.0,353.4 692.0,353.4 692.0,367.6 687.0,367.6 687.0,368.7 679.0,368.7 679.0,367.6 674.0,367.6" fill="#bebebe"/>
<polygon points="674.0,223.1 679.0,223.1 679.0,222.0 687.1,222.0 687.1,223.1 692.1,223.1 692.1,236.9 687.1,236.9 687.1,238.0 679.0,238.0 679.0,236.9 674.0,236.9" fill="#0000b0"/>
<polygon points="769.0,333.4 773.7,333.4 773.7,332.3 781.5,332.3 781.5,333.4 786.2,333.4 786.2,346.8 781.5,346.8 781.5,347.9 773.7,347.9 773.7,346.8 769.0,346.8" fill="#be0a0a"/>
<polygon points="764.0,379.1 769.8,379.1 769.8,378.0 779.2,378.0 779.2,379.1 785.0,379.1 785.0,395.5 779.2,395.5 779.2,396.6 769.8,396.6 769.8,395.5 764.0,395.5" fill="#0ab40a"/>
</svg>
<div id="hdr"></div>
<!-- top bar -->
<div class="box" style="left:48px;top:5px;width:48px;height:48px"></div>
<div class="box" style="left:108px;top:5px;width:1210px;height:48px;background:#fff;overflow:hidden">
  <div class="abs" style="left:0;top:0;width:251px;height:46px;background:#e8f2fc;border-right:1px solid #cacaca"></div>
  <div class="abs" style="left:753px;top:0;width:456px;height:46px;background:#f0f0f0;border-left:1px solid #cacaca"></div>
</div>
<!-- print settings panel -->
<div class="box" style="left:862px;top:61px;width:456px;height:399px;overflow:hidden">
  <div class="abs" style="left:0;top:0;width:455px;height:35px;background:#f0f0f0;border-bottom:1px solid #cacaca"></div>
  <div class="box" style="left:106px;top:48px;width:336px;height:27px;border-color:#cacaca"></div>
  <div class="box" style="left:24px;top:86px;width:353px;height:30px;border-radius:2px"></div>
  <div class="abs cat" style="top:129px"></div>
  <div class="abs cat" style="top:181px"></div>
  <div class="abs cat" style="top:207px"></div>
  <div class="abs cat" style="top:233px"></div>
  <div class="abs cat" style="top:311px"></div>
  <div class="box inp" style="top:155px"></div>
  <div class="box inp" style="top:259px"></div>
  <div class="box inp" style="top:285px"></div>
  <div class="abs" style="left:426px;top:128px;width:10px;height:69px;border-radius:5px;background:#08073f"></div>
  <div class="abs" style="left:0;top:336px;width:455px;height:1px;background:#cacaca"></div>
  <div class="abs" style="left:12px;top:349px;width:133px;height:30px;border:1px solid #196ef0;border-radius:0;background:#fff"></div>
  <div class="abs" style="left:0;top:390px;width:455px;height:8px;background:#f0f0f0;border-top:1px solid #cacaca"></div>
</div>
<!-- bottom right -->
<div class="box" style="left:1033px;top:496px;width:312px;height:130px"></div>
<div class="abs" style="left:1054px;top:579px;width:78.500px;height:30px;border:1px solid #196ef0;border-radius:0;background:#fff"></div>
<div class="abs" style="left:1144px;top:579px;width:180px;height:30px;border-radius:0;background:#196ef0"></div>
<!-- left toolbar -->
<div class="box" style="left:-2px;top:172px;width:55px;height:290px"></div>
<div class="abs" style="left:8px;top:226.5px;width:36px;height:36px;border-radius:18px;background:#e8f2fc"></div>
<!-- scale panel -->
<div class="box" style="left:64px;top:220px;width:306px;height:168px;border-radius:0"></div>
<div class="box fld" style="left:88px;top:233px"></div><div class="box fld" style="left:226px;top:233px"></div>
<div class="box fld" style="left:88px;top:263px"></div><div class="box fld" style="left:226px;top:263px"></div>
<div class="box fld" style="left:88px;top:293px"></div><div class="box fld" style="left:226px;top:293px"></div>
<div class="box" style="left:88px;top:329px;width:48px;height:48px;border-radius:0;border-color:#c0c0c0"></div>
<div class="box" style="left:148px;top:330px;width:18px;height:18px;border-radius:0;border-color:#c0c0c0"></div>
<div class="box" style="left:148px;top:359px;width:18px;height:18px;border-radius:0;border-color:#c0c0c0"></div>
<div class="abs" style="left:111px;top:237.5px;width:1px;height:14px;background:#191919"></div>
<!-- taskbar sliver -->
<div class="abs" style="left:0;top:642.500px;width:1365px;height:3.500px;background:#909090;border-top:1.500px solid #303030"></div>
<div class="abs tb" style="left:76px;width:53px"></div><div class="abs tb" style="left:447px;width:51px"></div><div class="abs tb" style="left:695.500px;width:57.500px"></div><div class="abs tb" style="left:758px;width:57.500px"></div><div class="abs tb" style="left:820.500px;width:57.500px"></div><div class="abs tb" style="left:1338px;width:27px;background:#c4c4c4"></div>
<div class="abs" style="left:21px;top:644.500px;width:11px;height:1.500px;background:#4a78b8;border-radius:3px 3px 0 0"></div>

<svg id="icons" width="1365" height="646" viewBox="0 0 1365 646" style="position:absolute;left:0;top:0;pointer-events:none" fill="none" stroke-linecap="butt">
<!-- folder -->
<g stroke="#08073f" stroke-width="2">
<path d="M61 21.8a2 2 0 0 1 2-2h5.2l3.6 4h9.4a2 2 0 0 1 2 2v10a2 2 0 0 1-2 2h-18.200000000000003a2 2 0 0 1-2-2z"/>
<path d="M68.2 20.4h10.2l3.2 3.6h-10z" fill="#08073f" stroke-width="1"/>
</g>
<!-- chevrons top bar -->
<g stroke="#666" stroke-width="1.2">
<path d="M337.6 26.8l4.2 4.2 4.2-4.2"/><path d="M840.9 26.8l4.2 4.2 4.2-4.2"/><path d="M1295.800 26.8l4.2 4.2 4.2-4.2"/>
</g>
<!-- extruder spool 1 -->
<circle cx="386.400" cy="28.9" r="10.700" fill="#fff" stroke="#191919" stroke-width="2"/>
<circle cx="386.400" cy="28.9" r="8.400" stroke="#f9c535" stroke-width="2.700"/>
<path d="M375.700 28.9v11" stroke="#191919" stroke-width="2"/>
<!-- sliders -->
<g stroke="#08073f" stroke-width="2">
<path d="M877 21.8h11.300M893.700 21.8h7.300M877 29h15.300M899.500 29h1.500M877 36.200h5.100M887.500 36.200h13.500"/>
<circle cx="891" cy="21.800" r="2.500" stroke-width="1.800"/><circle cx="895.100" cy="29" r="2.500" stroke-width="1.800"/><circle cx="884.800" cy="36.200" r="2.500" stroke-width="1.800"/>
</g>
<!-- infill icon top -->
<defs>
<clipPath id="cpi"><rect x="1106" y="21.900" width="14" height="14"/></clipPath>
<g id="dia"><path d="M0-3.100l3.100 3.100-3.100 3.100-3.100-3.100z"/></g>
<g id="infill">
<rect x="1104" y="19.900" width="18" height="18" rx="3" />
<g clip-path="url(#cpi)" fill="#fff">
<use href="#dia" x="1113" y="24.400"/><use href="#dia" x="1108.500" y="28.900"/><use href="#dia" x="1117.500" y="28.900"/><use href="#dia" x="1113" y="33.400"/>
<use href="#dia" x="1104" y="24.400"/><use href="#dia" x="1122" y="24.400"/><use href="#dia" x="1104" y="33.400"/><use href="#dia" x="1122" y="33.400"/>
<use href="#dia" x="1108.500" y="19.900"/><use href="#dia" x="1117.500" y="19.900"/><use href="#dia" x="1108.500" y="37.900"/><use href="#dia" x="1117.500" y="37.900"/>
</g></g>
</defs>
<use href="#infill" fill="#08073f"/>
<!-- support icon -->
<g stroke="#08073f" stroke-width="2" stroke-linejoin="round">
<path d="M1175 19.900l6.400 6.300-6.400 6.300-6.400-6.300z"/>
</g>
<g fill="#08073f">
<path d="M1166 29.100l2 2v6.700h-2zM1170.100 33.200l2 2v2.600h-2zM1174 35.800h2v2h-2zM1180 33.200l-2 2v2.600h2zM1184 29.100l-2 2v6.700h2z"/>
</g>
<!-- adhesion icon -->
<g stroke="#08073f" stroke-width="2">
<path d="M1236 19.100v10M1231.700 24.500l4.300 4.400 4.300-4.400"/>
<path d="M1228.900 27.300v3a2.500 2.500 0 0 0 2.500 2.500h9.200a2.500 2.500 0 0 0 2.500-2.500v-3"/>
<path d="M1227 37h18" stroke-dasharray="2 2"/>
</g>
<!-- panel close -->
<path d="M1296 75.200l8 8M1304 75.200l-8 8" stroke="#555" stroke-width="1.100"/>
<!-- star -->
<path d="M1262 118.200l1.800 4.100 4.500.4-3.400 3 1 4.400-3.900-2.300-3.900 2.300 1-4.400-3.400-3 4.500-.4z" fill="#555"/>
<path d="M1282.800 121.800l4.200 4.200 4.200-4.200" stroke="#555" stroke-width="1.200"/>
<!-- search -->
<g stroke="#333" stroke-width="1.500"><circle cx="910.500" cy="160" r="4.300"/><path d="M907.400 163.100l-6.300 6.500"/></g>
<!-- hamburger -->
<path d="M1254 155.600h18M1254 163h18M1254 170.300h18" stroke="#555" stroke-width="1.500"/>
<!-- category icons -->
<g fill="#1f1f1f">
<rect x="899" y="194" width="5" height="2"/><rect x="899" y="199" width="11" height="4"/><rect x="899" y="206" width="18" height="6"/>
</g>
<g stroke="#1f1f1f" stroke-width="2"><rect x="900" y="247" width="16" height="16" rx="2.500"/></g>
<g fill="#1f1f1f">
<rect x="903.100" y="250" width="1.800" height="1.800"/><rect x="907.100" y="250" width="1.800" height="1.800"/><rect x="911.200" y="250" width="1.800" height="1.800"/>
<rect x="903.100" y="254" width="1.800" height="1.800"/><rect x="911.200" y="254" width="1.800" height="1.800"/>
<rect x="903.100" y="258.100" width="1.800" height="1.800"/><rect x="907.100" y="258.100" width="1.800" height="1.800"/><rect x="911.200" y="258.100" width="1.800" height="1.800"/>
<path d="M899 274l2.500-2h13l2.500 2zM899 288l2.500 2h13l2.500-2z"/>
<rect x="901.100" y="276.100" width="1.800" height="1.800"/><rect x="905.100" y="276.100" width="1.800" height="1.800"/><rect x="909.100" y="276.100" width="1.800" height="1.800"/><rect x="913.200" y="276.100" width="1.800" height="1.800"/>
<rect x="901.100" y="284.100" width="1.800" height="1.800"/><rect x="905.100" y="284.100" width="1.800" height="1.800"/><rect x="909.100" y="284.100" width="1.800" height="1.800"/><rect x="913.200" y="284.100" width="1.800" height="1.800"/>
</g>
<use href="#infill" fill="#1f1f1f" transform="translate(-205 278)"/>
<g stroke="#1f1f1f" stroke-width="1.700"><circle cx="908" cy="384.900" r="9.100"/><path d="M898.900 384.900v9"/><circle cx="908" cy="385.100" r="2.300" stroke-width="1.500"/><path d="M908.300 379.600l3.400 1.400" stroke-width="1.500"/></g>
<!-- category chevrons -->
<g stroke="#555" stroke-width="1.200">
<path d="M1258.800 200.800l4.200 4.200 4.200-4.200"/><path d="M1258.800 304.800l4.200 4.200 4.200-4.200"/><path d="M1258.800 382.800l4.200 4.200 4.200-4.200"/>
<path d="M1265.100 250.800l-4.200 4.200 4.200 4.200"/><path d="M1265.100 276.800l-4.200 4.200 4.200 4.200"/>
<path d="M1258.800 356.800l4.200 4.200 4.200-4.200"/>
</g>
<!-- link + reset icons -->
<g stroke="#666" stroke-width="1.600" stroke-linecap="round">
<g transform="translate(1102.1 228.9) rotate(-41)"><path d="M1.500-3.700h3.200a2.900 2.900 0 0 1 0 5.800h-5.800"/><path d="M-1.500 3.700h-3.200a2.900 2.900 0 0 1 0-5.800h5.800"/></g>
<path id="rst" d="M1127.300 222.400l-3 2.800 2.900 2.700M1124.600 225.200h4.400a5.200 5.200 0 1 1-5.200 5.200"/>
<use href="#rst" y="104"/>
</g>
<!-- recommended chevron -->
<path d="M895.100 421.700l-4.200 4.200 4.200 4.200" stroke="#196ef0" stroke-width="1.200"/>
<!-- drag dots -->
<path d="M1085 455.500h10" stroke="#999" stroke-width="1" stroke-dasharray="1.500 2"/>
<!-- bottom-right icons -->
<g stroke="#08073f" stroke-width="1.800">
<circle cx="1066" cy="524.800" r="8.700"/><path d="M1066 519.200v6.100h5"/>
<circle cx="1312.100" cy="524.900" r="8.700"/><path d="M1312.100 523.600v6.200M1312.100 519.500v2"/>
<circle cx="1066" cy="557.700" r="8.700"/><path d="M1057.300 557.700v9"/><circle cx="1065.800" cy="557.700" r="2.200" stroke-width="1.500"/><path d="M1066.300 552.400l3.100 1" stroke-width="1.500"/>
</g>
<!-- toolbar icons -->
<g stroke="#08073f" stroke-width="2">
<path d="M17.800 196.900h16.500M26.050 188.700v16.400"/>
<path d="M22.800 191.900l3.250-3.300 3.250 3.300M22.800 201.900l3.250 3.300 3.250-3.300M21 193.600l-3.300 3.300 3.300 3.300M31.100 193.600l3.300 3.300-3.300 3.300" stroke-linejoin="miter"/>
<!-- scale -->
<path d="M17.900 243.800v-4.800a2 2 0 0 1 2-2h12.100a2 2 0 0 1 2 2v12a2 2 0 0 1-2 2h-4.800"/>
<rect x="17.900" y="247.300" width="6" height="5.600"/>
<path d="M24.300 246.900l6-6M24.400 240.800h5.900v6.100"/>
<!-- rotate -->
<path d="M33.900 293.500a7.900 7.900 0 0 0-14.200-4.800M18.900 283v6.200h6"/>
<!-- mirror -->
<path d="M17.900 336.800v8.400l4.100-4.200z"/>
<path d="M35.800 335.400v11.200l-6.700-5.600z" fill="#08073f" stroke="none"/>
<path d="M26.050 331.900v18.200" stroke-dasharray="2 2"/>
</g>
<g fill="#08073f">
<rect x="17.100" y="293" width="1.900" height="1.900"/><rect x="18.600" y="296.700" width="1.900" height="1.900"/><rect x="21.700" y="299.300" width="1.900" height="1.900"/><rect x="25.500" y="300" width="1.900" height="1.900"/><rect x="29.200" y="298.900" width="1.900" height="1.900"/><rect x="32.100" y="296" width="1.900" height="1.900"/>
</g>
<!-- per model -->
<g stroke="#08073f" stroke-width="2">
<path d="M18.100 386.900v-3.800a2 2 0 0 1 2-2h3.700v5.800z"/>
<path d="M28.100 391.100h5.900v3.800a2 2 0 0 1-2 2h-3.900z"/>
</g>
<path d="M17.100 390.100h7.700v7.800h-4.700a3 3 0 0 1-3-3z" fill="#08073f"/>
<clipPath id="cph"><path d="M27.100 380.100h4.900a3 3 0 0 1 3 3v4.800h-7.900z"/></clipPath>
<g clip-path="url(#cph)" stroke="#08073f" stroke-width="2"><path d="M24 384l7-7M25.500 389.500l11-11M30 390.500l8-8"/></g>
<!-- support blocker -->
<g stroke="#08073f" stroke-width="2" stroke-linejoin="round"><path d="M26.050 428l6.300 6.200-6.300 6.200-6.300-6.200z"/><path d="M31.100 441l4 4M35.100 441l-4 4" stroke-width="1.800"/></g>
<path d="M17 437l2.100 2.100v6.800h-2.100zM21 441l2 2v2.900h-2zM24.900 444h2.200v1.900h-2.200z" fill="#08073f"/>
<!-- scale panel pointer -->
<path d="M64.500 237l-10 8 10 8z" fill="#fff" stroke="none"/><path d="M64.500 237l-10 8 10 8" stroke="#cacaca" stroke-width="1"/>
<!-- reset in button -->
<g stroke="#08073f" stroke-width="1.800" stroke-linecap="round"><path d="M110.400 344.700l-3.600 3.300 3.500 3.300M107.300 348h5a6.300 6.300 0 1 1-6.300 6.300"/></g>
<!-- check -->
<path d="M154.300 368.200l2 2 3.300-3.600" stroke="#555" stroke-width="1.100"/>
<!-- object list -->
<path d="M68 534.100l4-4.100 4.100 4.100" stroke="#555" stroke-width="1.100"/>
<path d="M69.900 563.700l7.600-7.200" stroke="#555" stroke-width="3.200"/><path d="M68.300 565.300l2.800-.6-2.200-2.200z" fill="#555"/><path d="M66.200 567h12.800" stroke="#555" stroke-width="1.600"/>
<!-- view cubes -->
<g stroke="#666" stroke-width="1.900" stroke-linejoin="round">
<path d="M76 610.300l7.700 4.500v8l-7.700 4.700-7.800-4.700v-8zM68.200 614.800l7.800 4.500 7.700-4.500M76 619.300v8.200"/>
<!-- front -->
<path d="M98.100 615.800h10.700v10.900h-10.700z" fill="#666"/><path d="M98.100 615.800l4.900-4.600h10.800l-5 4.600M113.800 611.200v10.900l-5 4.600"/>
<!-- top -->
<path d="M128.100 615.800h10.700v10.900h-10.700z"/><path d="M128.100 615.800l4.900-4.600h10.800l-5 4.600z" fill="#666"/><path d="M143.800 611.200v10.900l-5 4.600"/>
<!-- left -->
<path d="M163.200 615.800h10.700v10.900h-10.700z"/><path d="M163.200 615.800l-5-4.600v10.900l5 4.600z" fill="#666"/><path d="M158.200 611.200h10.800l4.900 4.600"/>
<!-- right -->
<path d="M188.100 615.800h10.700v10.900h-10.700z"/><path d="M198.800 615.800l5-4.600v10.900l-5 4.600z" fill="#666"/><path d="M188.100 615.800l4.900-4.600h10.800"/>
</g>
</svg>

<div class="t" style="left:126.4px;top:23.10px;font-size:13.00px;color:#191919;letter-spacing:-0.03px">Creality Ender-3</div>
<div class="t" style="left:413.4px;top:16.50px;font-size:11.00px;color:#191919">Generic PLA</div>
<div class="t" style="left:413.4px;top:31.51px;font-size:11.25px;color:#191919;letter-spacing:-0.02px;font-weight:bold">0.4mm Nozzle</div>
<div class="t" style="left:383.2px;top:24.00px;font-size:11.50px;color:#191919;font-weight:bold">1</div>
<div class="t" style="left:910.3px;top:22.91px;font-size:13.25px;color:#191919">Standard Quality - 0.3mm</div>
<div class="t" style="left:1131.4px;top:23.91px;font-size:12.00px;color:#191919;letter-spacing:-0.27px">5%</div>
<div class="t" style="left:1193.4px;top:23.91px;font-size:12.00px;color:#191919;letter-spacing:0.55px">On</div>
<div class="t" style="left:1254.4px;top:23.91px;font-size:12.00px;color:#191919;letter-spacing:0.60px">Off</div>
<div class="t" style="left:874.5px;top:73.80px;font-size:12.50px;color:#666a72;letter-spacing:0.52px">Print settings</div>
<div class="t" style="left:875.5px;top:117.81px;font-size:13.25px;color:#191919;letter-spacing:-0.02px">Profile</div>
<div class="t" style="left:981.2px;top:118.41px;font-size:12.00px;color:#191919;letter-spacing:-0.04px;-webkit-text-stroke:0.25px #191919">Standard Quality</div>
<div class="t" style="left:1073.3px;top:119.40px;font-size:11.25px;color:#c4c4cc;letter-spacing:0.04px">- 0.2mm</div>
<div class="t" style="left:929.8px;top:157.70px;font-size:12.25px;color:#8b8b93;letter-spacing:0.02px;font-style:italic">Search settings</div>
<div class="t" style="left:935.4px;top:196.91px;font-size:13.25px;color:#191919;letter-spacing:0.06px;font-weight:bold">Quality</div>
<div class="t" style="left:896.7px;top:224.31px;font-size:11.25px;color:#191919;letter-spacing:0.25px;font-style:italic">Layer Height</div>
<div class="t" style="left:1155.0px;top:224.31px;font-size:10.75px;color:#191919;letter-spacing:-0.01px">0.3</div>
<div class="t" style="right:90.3px;top:224.30px;font-size:11.50px;color:#8a8a8a;letter-spacing:-0.03px">mm</div>
<div class="t" style="left:935.2px;top:249.02px;font-size:13.25px;color:#191919;letter-spacing:0.02px;font-weight:bold">Walls</div>
<div class="t" style="left:935.4px;top:275.11px;font-size:13.25px;color:#191919;font-weight:bold">Top/Bottom</div>
<div class="t" style="left:935.5px;top:301.02px;font-size:13.25px;color:#191919;letter-spacing:0.24px;font-weight:bold">Infill</div>
<div class="t" style="left:896.7px;top:328.31px;font-size:11.25px;color:#191919;letter-spacing:0.33px;font-style:italic">Infill Density</div>
<div class="t" style="left:1155.2px;top:328.31px;font-size:10.75px;color:#191919;letter-spacing:-0.05px">5.0</div>
<div class="t" style="right:89.9px;top:328.31px;font-size:10.50px;color:#8a8a8a">%</div>
<div class="t" style="left:896.7px;top:354.30px;font-size:11.50px;color:#191919;letter-spacing:0.32px">Infill Pattern</div>
<div class="t" style="left:1155.2px;top:354.31px;font-size:11.25px;color:#191919;letter-spacing:-0.01px">Cubic</div>
<div class="t" style="left:935.5px;top:379.02px;font-size:13.25px;color:#191919;letter-spacing:0.47px;font-weight:bold">Material</div>
<div class="t" style="left:905.7px;top:419.81px;font-size:13.25px;color:#196ef0;letter-spacing:-0.01px">Recommended</div>
<div class="t" style="left:1084.0px;top:519.40px;font-size:13.00px;color:#191919;font-weight:bold">7 hours 46 minutes</div>
<div class="t" style="left:1084.0px;top:554.00px;font-size:11.00px;color:#191919">56g · 18.82m</div>
<div class="t" style="left:1069.4px;top:588.02px;font-size:13.25px;color:#196ef0">Preview</div>
<div class="t" style="left:1198.2px;top:588.00px;font-size:13.00px;color:#fff;letter-spacing:-0.06px">Save to Disk</div>
<div class="t" style="left:90.2px;top:529.30px;font-size:11.00px;color:#666;letter-spacing:0.34px">Object list</div>
<div class="t" style="left:92.3px;top:557.91px;font-size:10.50px;color:#555;letter-spacing:0.03px">CE3_ANILLO 1 v1</div>
<div class="t" style="left:64.5px;top:581.91px;font-size:11.00px;color:#555">140.0 x 140.0 x 15.0 mm</div>
<div class="t" style="left:76.0px;top:240.81px;font-size:10.50px;color:#ff0000">X</div>
<div class="t" style="left:76.0px;top:270.81px;font-size:10.50px;color:#32dc32">Y</div>
<div class="t" style="left:76.0px;top:300.81px;font-size:10.50px;color:#0000ff">Z</div>
<div class="t" style="left:93.2px;top:240.50px;font-size:11.00px;color:#191919;letter-spacing:-0.05px">139.9687</div>
<div class="t" style="left:93.2px;top:270.50px;font-size:11.00px;color:#191919;letter-spacing:-0.05px">139.9843</div>
<div class="t" style="left:93.2px;top:300.51px;font-size:10.75px;color:#191919;letter-spacing:0.02px">15</div>
<div class="t" style="right:1151.4px;top:239.51px;font-size:11.75px;color:#8a8a8a;letter-spacing:-0.04px">mm</div>
<div class="t" style="left:231.0px;top:240.50px;font-size:10.50px;color:#191919">100</div>
<div class="t" style="right:1013.2px;top:241.52px;font-size:10.00px;color:#8a8a8a">%</div>
<div class="t" style="right:1151.4px;top:269.51px;font-size:11.75px;color:#8a8a8a;letter-spacing:-0.04px">mm</div>
<div class="t" style="left:231.0px;top:270.50px;font-size:10.50px;color:#191919">100</div>
<div class="t" style="right:1013.2px;top:271.50px;font-size:10.00px;color:#8a8a8a">%</div>
<div class="t" style="right:1151.4px;top:299.51px;font-size:11.75px;color:#8a8a8a;letter-spacing:-0.04px">mm</div>
<div class="t" style="left:231.0px;top:300.50px;font-size:10.50px;color:#191919">100</div>
<div class="t" style="right:1013.2px;top:301.50px;font-size:10.00px;color:#8a8a8a">%</div>
<div class="t" style="left:170.1px;top:334.11px;font-size:11.00px;color:#191919;letter-spacing:0.05px">Snap Scaling</div>
<div class="t" style="left:170.1px;top:363.90px;font-size:11.25px;color:#191919;letter-spacing:0.28px">Uniform Scaling</div>
</body></html>
